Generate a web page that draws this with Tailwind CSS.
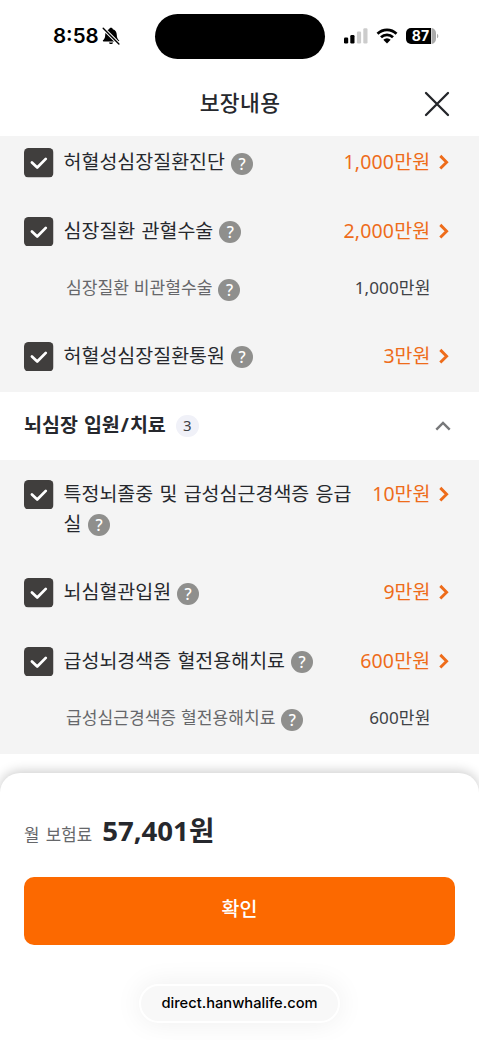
<!DOCTYPE html>
<html lang="ko">
<head>
<meta charset="utf-8">
<title>보장내용</title>
<script src="https://cdn.jsdelivr.net/npm/@tailwindcss/browser@4"></script>
</head>
<body class="bg-white">
<svg class="hidden">
  <symbol id="check" viewBox="0 0 29 29"><rect width="29" height="29" rx="4.5" fill="#403e3d"/><path d="M7.8 14.2l5.200 5 8.400-8.500" fill="none" stroke="#fff" stroke-width="2.700" stroke-linecap="round" stroke-linejoin="round"/></symbol>
  <symbol id="chev" viewBox="0 0 10 16"><path d="M1.300 1.900l6.300 6.300-6.300 6.300" fill="none" stroke="#ee6c1a" stroke-width="2.900"/></symbol>
</svg>
<div class="flex h-[1040px] w-[479px] flex-col overflow-hidden bg-white font-['Noto_Sans','Noto_Sans_CJK_KR',sans-serif] text-[19.5px] text-[#26282d]">
  <div class="flex h-[72px] shrink-0 items-center pl-[53px] font-[Inter,sans-serif] text-black">
    <span class="w-[50px] text-[20.5px] leading-6 font-semibold">8:58</span>
    <svg class="-ml-px h-[18px] w-[18px]" viewBox="0 0 18 18"><path d="M9 .8c-1 0-1.800.6-1.900 1.500C4.700 3.100 3.200 5 3.200 8c0 3-1 4.200-2.200 5.300-.4.500-.1 1.100.5 1.100h15c.6 0 .9-.6.500-1.100C15.800 12.200 14.800 11 14.800 8c0-3-1.500-4.900-3.900-5.700C10.800 1.400 10 .8 9 .8zM6.900 15.400c.3 1.100 1.100 1.700 2.100 1.700s1.800-.6 2.100-1.700z"/><path d="M1.200 1.200l15.500 15.500" stroke="#fff" stroke-width="3.400"/><path d="M1.200 1.200l15.700 15.700" stroke="#000" stroke-width="1.400" stroke-linecap="round"/></svg>
    <div class="ml-[35px] h-[45px] w-[170px] rounded-full bg-black"></div>
    <svg class="ml-[18px] h-[16px] w-[25px]" viewBox="0 0 25 16"><rect x="1" y="9.500" width="4.200" height="6" rx="1.200"/><rect x="7.300" y="7" width="4.200" height="8.500" rx="1.200"/><g fill="#ccc"><rect x="13.900" y="3.500" width="4.200" height="12" rx="1.200"/><rect x="20.300" y="0.300" width="4.200" height="15.200" rx="1.200"/></g></svg>
    <svg class="ml-[8px] h-[16px] w-[22px]" viewBox="0 0 22 16"><g fill="none" stroke="#000" stroke-width="2.700"><path d="M1.500 5.700a13.500 13.500 0 0 1 19 0"/><path d="M5 9.300a8.500 8.500 0 0 1 12 0"/></g><path d="M7.300 11.700a5.200 5.200 0 0 1 7.400 0L11 15.500z"/></svg>
    <svg class="ml-[7px] h-[18px] w-[34px]" viewBox="0 0 34 18"><path d="M6 1h20v16H6a5 5 0 0 1-5-5V6a5 5 0 0 1 5-5z"/><path d="M26.500 1c2.800.4 4.500 2.300 4.500 5v6c0 2.700-1.700 4.600-4.500 5z" fill="#aaa"/><path d="M32 6.700c1.800.8 1.800 3.800 0 4.600z" fill="#aaa"/><text x="15.500" y="14.100" text-anchor="middle" font-family="Inter" font-weight="700" font-size="14" fill="#fff">87</text></svg>
  </div>
  <header class="flex h-[64px] shrink-0 items-start justify-end pr-[29px]">
    <h1 class="w-[82px] pt-[16px] text-center text-[21.5px] leading-[29px] font-medium tracking-[0.4px] whitespace-nowrap">보장내용</h1>
    <svg class="mt-[19px] ml-[143px] h-[26px] w-[26px]" viewBox="0 0 26 26"><path d="M2 2l22 22M24 2L2 24" stroke="#232529" stroke-width="2.300" stroke-linecap="round"/></svg>
  </header>
  <section class="h-[255.5px] shrink-0 bg-[#f4f4f4] px-6 pt-3 [word-spacing:1.2px]">
    <div class="flex h-[68.5px]">
      <svg class="h-[29.5px] w-[29.5px]"><use href="#check"/></svg>
      <p class="ml-[10px] flex-1 leading-[28px]">허혈성심장질환진단<span class="ml-[6px] inline-flex h-[22px] w-[22px] items-center justify-center rounded-full bg-[#8f8f8d] align-middle text-[16px] leading-none font-medium text-white">?</span></p>
      <b class="leading-[27px] font-normal tracking-[0.2px] text-[#ee6c1a]">1,000만원</b><svg class="mt-[6px] mr-[6.5px] ml-[8px] h-4 w-[10px]"><use href="#chev"/></svg>
    </div>
    <div class="flex h-[58px]">
      <svg class="h-[29.5px] w-[29.5px]"><use href="#check"/></svg>
      <p class="ml-[10px] flex-1 leading-[28px]">심장질환 관혈수술<span class="ml-[6px] inline-flex h-[22px] w-[22px] items-center justify-center rounded-full bg-[#8f8f8d] align-middle text-[16px] leading-none font-medium text-white">?</span></p>
      <b class="leading-[27px] font-normal tracking-[0.2px] text-[#ee6c1a]">2,000만원</b><svg class="mt-[6px] mr-[6.5px] ml-[8px] h-4 w-[10px]"><use href="#chev"/></svg>
    </div>
    <div class="flex h-[67px] pl-[42px] text-[17.1px] leading-[26px] [word-spacing:0.5px]">
      <p class="flex-1 text-[#66676a]">심장질환 비관혈수술<span class="ml-[6px] inline-flex h-[22px] w-[22px] translate-y-[1px] items-center justify-center rounded-full bg-[#8f8f8d] align-middle text-[16px] leading-none font-medium text-white">?</span></p>
      <span class="mr-[24.5px] tracking-[0.1px] text-[#404246]">1,000만원</span>
    </div>
    <div class="flex">
      <svg class="h-[29.5px] w-[29.5px]"><use href="#check"/></svg>
      <p class="ml-[10px] flex-1 leading-[28px]">허혈성심장질환통원<span class="ml-[6px] inline-flex h-[22px] w-[22px] items-center justify-center rounded-full bg-[#8f8f8d] align-middle text-[16px] leading-none font-medium text-white">?</span></p>
      <b class="leading-[27px] font-normal text-[#ee6c1a]">3만원</b><svg class="mt-[6px] mr-[6.5px] ml-[8px] h-4 w-[10px]"><use href="#chev"/></svg>
    </div>
  </section>
  <div class="flex h-[68.5px] shrink-0 items-center px-6">
    <h2 class="-mt-px text-[19.5px] leading-[28px] font-bold [word-spacing:1px]">뇌심장 입원<span class="mx-px">/</span>치료</h2>
    <span class="ml-[10px] flex h-[22px] w-[23px] items-center justify-center rounded-full bg-[#f0f1f8] pb-px text-[15px] text-[#404246]">3</span>
    <svg class="mr-[4px] ml-auto h-[10px] w-4" viewBox="0 0 16 10"><path d="M1.300 8.700L8 2l6.700 6.700" fill="none" stroke="#77787a" stroke-width="2.400"/></svg>
  </div>
  <section class="h-[293.5px] shrink-0 bg-[#f4f4f4] px-6 pt-[19.5px] [word-spacing:1.2px]">
    <div class="flex h-[98.5px]">
      <svg class="h-[29.5px] w-[29.5px]"><use href="#check"/></svg>
      <p class="-mt-[0.5px] ml-[10px] flex-1 leading-[30px] whitespace-nowrap">특정뇌졸중 및 급성심근경색증 응급<br>실<span class="ml-[6.5px] inline-flex h-[22px] w-[22px] -translate-y-px items-center justify-center rounded-full bg-[#8f8f8d] align-middle text-[16px] leading-none font-medium text-white">?</span></p>
      <b class="leading-[27px] font-normal text-[#ee6c1a]">10만원</b><svg class="mt-[6px] mr-[6.5px] ml-[8px] h-4 w-[10px]"><use href="#chev"/></svg>
    </div>
    <div class="flex h-[68.5px]">
      <svg class="h-[29.5px] w-[29.5px]"><use href="#check"/></svg>
      <p class="ml-[10px] flex-1 leading-[28px]">뇌심혈관입원<span class="ml-[6px] inline-flex h-[22px] w-[22px] items-center justify-center rounded-full bg-[#8f8f8d] align-middle text-[16px] leading-none font-medium text-white">?</span></p>
      <b class="leading-[27px] font-normal text-[#ee6c1a]">9만원</b><svg class="mt-[6px] mr-[6.5px] ml-[8px] h-4 w-[10px]"><use href="#chev"/></svg>
    </div>
    <div class="flex h-[58px]">
      <svg class="h-[29.5px] w-[29.5px]"><use href="#check"/></svg>
      <p class="ml-[10px] flex-1 leading-[28px]">급성뇌경색증 혈전용해치료<span class="ml-[6px] inline-flex h-[22px] w-[22px] items-center justify-center rounded-full bg-[#8f8f8d] align-middle text-[16px] leading-none font-medium text-white">?</span></p>
      <b class="leading-[27px] font-normal tracking-[0.2px] text-[#ee6c1a]">600만원</b><svg class="mt-[6px] mr-[6.5px] ml-[8px] h-4 w-[10px]"><use href="#chev"/></svg>
    </div>
    <div class="flex pl-[42px] text-[17.1px] leading-[26px] [word-spacing:0.5px]">
      <p class="flex-1 text-[#66676a]">급성심근경색증 혈전용해치료<span class="ml-[6px] inline-flex h-[22px] w-[22px] translate-y-[1px] items-center justify-center rounded-full bg-[#8f8f8d] align-middle text-[16px] leading-none font-medium text-white">?</span></p>
      <span class="mr-[24.5px] tracking-[0.1px] text-[#404246]">600만원</span>
    </div>
  </section>
  <footer class="mt-[19px] flex flex-1 flex-col rounded-t-[20px] bg-white px-6 pt-[37px] shadow-[0_-2px_12px_rgba(0,0,0,0.2)]">
    <div class="flex h-[67px] items-baseline leading-[40px]">
      <span class="text-[16.8px] text-[#66676a] [word-spacing:2px]">월 보험료</span>
      <strong class="ml-[10px] text-[27.6px] font-bold">57,401원</strong>
    </div>
    <button class="h-[68px] shrink-0 rounded-[10px] bg-[#fc6900] pb-[3px] text-[19.5px] font-medium text-white">확인</button>
    <div class="mx-auto mt-[39px] flex h-[39px] w-[201px] items-center justify-center rounded-full border-2 border-white bg-[#f8f8f8] pt-px font-[Inter,sans-serif] text-[14.7px] font-medium text-black shadow-[0_0_28px_rgba(0,0,0,0.07)]">direct.hanwhalife.com</div>
  </footer>
</div>
</body>
</html>
